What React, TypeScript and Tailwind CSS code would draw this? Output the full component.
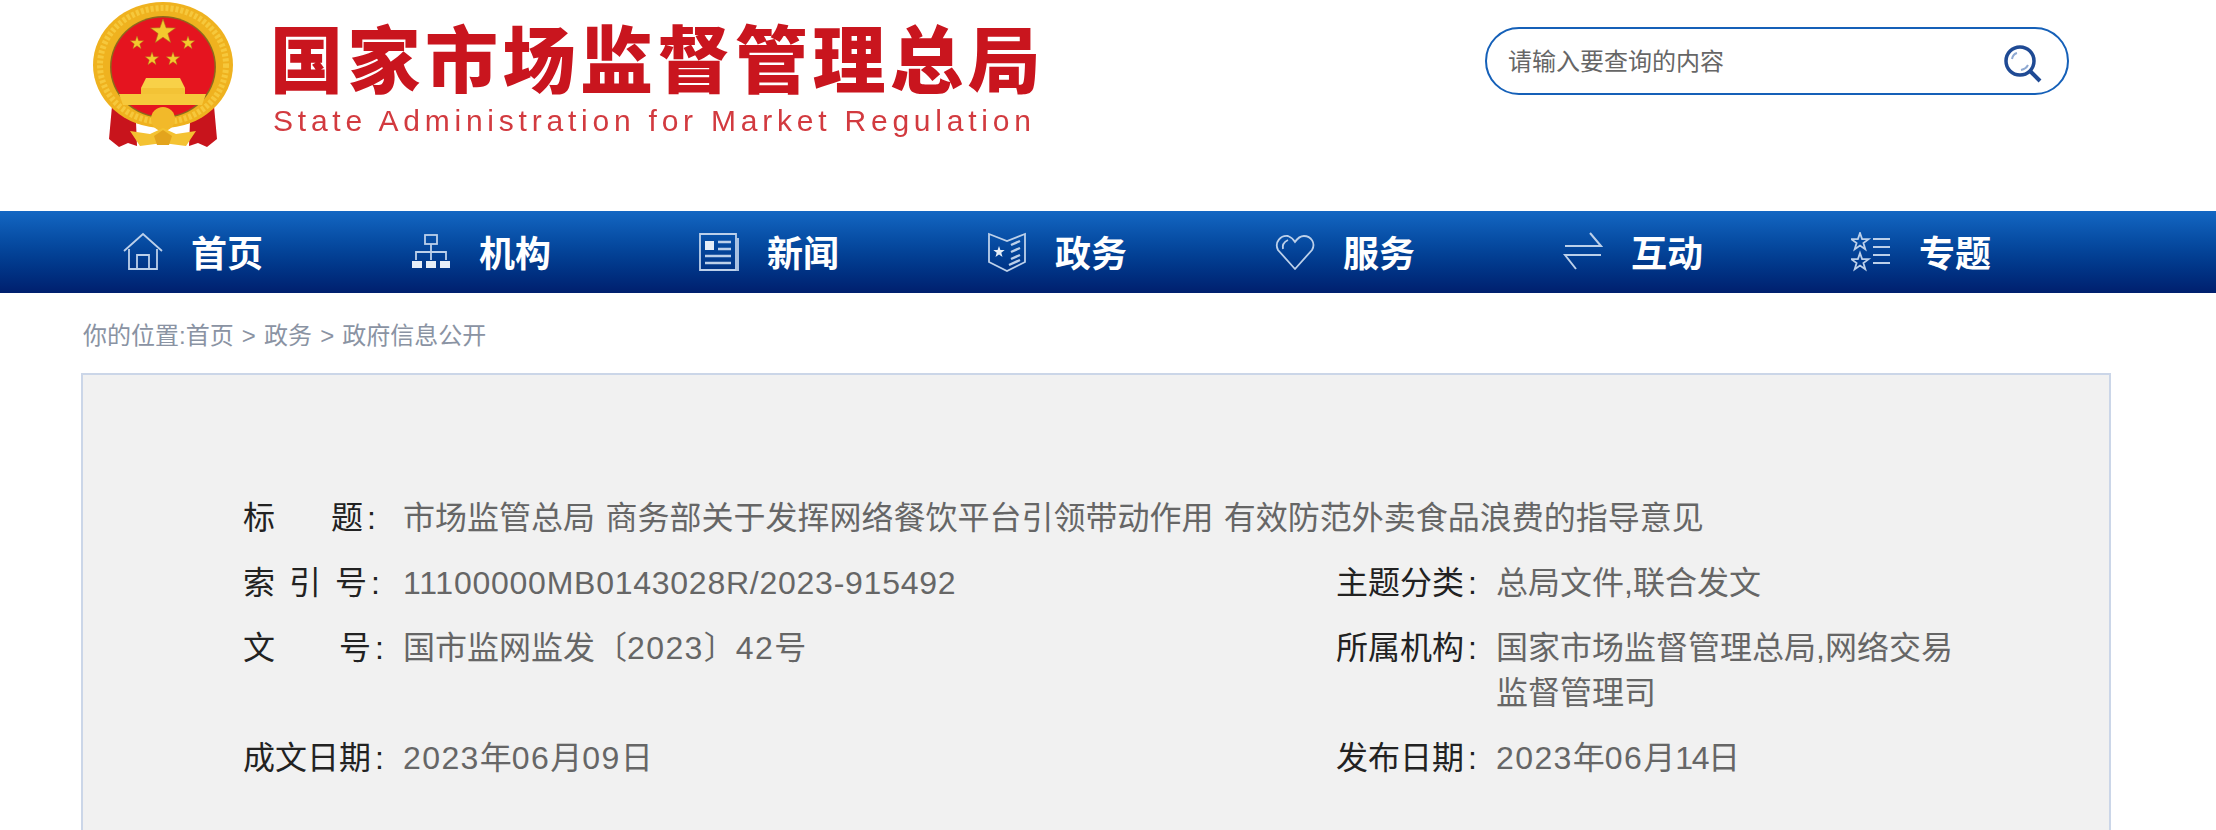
import type { ReactNode } from 'react'

const starPoints = (cx: number, cy: number, r: number) => {
  const pts: string[] = []
  for (let i = 0; i < 10; i++) {
    const rad = i % 2 === 0 ? r : r * 0.4
    const a = -Math.PI / 2 + (i * Math.PI) / 5
    pts.push(`${(cx + rad * Math.cos(a)).toFixed(1)},${(cy + rad * Math.sin(a)).toFixed(1)}`)
  }
  return pts.join(' ')
}

function Emblem() {
  return (
    <svg viewBox="92 0 142 150" className="h-[150px] w-[142px] shrink-0 blur-[0.5px]">
      <path d="M112 106 L136 122 L137 146 L128 143 L119 147 L109 139 Z" fill="#c8141c" />
      <path d="M214 106 L190 122 L189 146 L198 143 L207 147 L217 139 Z" fill="#c8141c" />
      <ellipse cx="163" cy="65" rx="70" ry="63" fill="#efb21f" />
      <ellipse cx="163" cy="65" rx="63" ry="57" fill="none" stroke="#f6c83c" strokeWidth="6" strokeDasharray="3 2" />
      <ellipse cx="163" cy="67" rx="53" ry="51" fill="#8c6a1c" />
      <ellipse cx="163" cy="67" rx="51.5" ry="49.5" fill="#e5141f" />
      <polygon points={starPoints(163, 32, 13)} fill="#f4c92e" stroke="#a8761a" strokeWidth="0.6" />
      <polygon points={starPoints(137, 43, 7)} fill="#f4c92e" stroke="#a8761a" strokeWidth="0.4" />
      <polygon points={starPoints(188, 43, 7)} fill="#f4c92e" stroke="#a8761a" strokeWidth="0.4" />
      <polygon points={starPoints(152, 59, 7)} fill="#f4c92e" stroke="#a8761a" strokeWidth="0.4" />
      <polygon points={starPoints(173, 59, 7)} fill="#f4c92e" stroke="#a8761a" strokeWidth="0.4" />
      <path d="M146 78 L180 78 L185 88 L141 88 Z" fill="#f8d148" />
      <rect x="141" y="88" width="44" height="6" fill="#f3c336" />
      <path d="M119 94 L206 94 L202 105 L123 105 Z" fill="#f6c83c" />
      <circle cx="163" cy="119" r="12" fill="#f2b92a" />
      <path d="M130 131 L150 134 L163 128 L176 134 L196 131 L186 146 L163 143 L140 146 Z" fill="#f4c232" />
      <path d="M163 130 L172 136 L169 145 L157 145 L154 136 Z" fill="#e3a41d" />
    </svg>
  )
}

const iconClass = 'h-[40px] w-[40px] shrink-0 fill-none stroke-[#bcd0ea]'

function HomeIcon() {
  return (
    <svg viewBox="0 0 40 40" className={iconClass} strokeWidth="1.8">
      <path d="M1 19 L20 2 L39 19" />
      <path d="M6 17 V37 H34 V17" />
      <path d="M14 37 V23 H26 V37" />
    </svg>
  )
}

function OrgIcon() {
  return (
    <svg viewBox="0 0 40 40" className={iconClass} strokeWidth="1.8">
      <rect x="14" y="3" width="12" height="9" />
      <path d="M20 12 V28 M5 28 V20 H35 V28" />
      <path d="M1 29 H11 V36 H1 Z M15 29 H25 V36 H15 Z M29 29 H39 V36 H29 Z" fill="#e6eef8" stroke="none" />
    </svg>
  )
}

function NewsIcon() {
  return (
    <svg viewBox="0 0 40 40" className={iconClass} strokeWidth="1.8">
      <path d="M1 2 H37 V38 H1 Z" />
      <path d="M39 6 V39" />
      <rect x="6" y="9" width="9" height="9" fill="#e6eef8" stroke="none" />
      <path d="M19 10 H32 M19 17 H32 M6 24 H32 M6 31 H32" strokeWidth="2.4" />
    </svg>
  )
}

function AffairsIcon() {
  return (
    <svg viewBox="0 0 40 40" className={iconClass} strokeWidth="1.8">
      <path d="M2 2 L20 9 L38 2 V30 L20 39 L2 30 Z" />
      <polygon points={starPoints(12, 20, 6)} fill="#e6eef8" stroke="none" />
      <path d="M24 13 L33 9 M24 20 L33 16 M24 27 L33 23 M22 33 L33 28" strokeWidth="2.4" />
    </svg>
  )
}

function HeartIcon() {
  return (
    <svg viewBox="0 0 40 40" className={iconClass} strokeWidth="1.8">
      <path d="M20 37 L3 18 C-1 10 6 3 13 4 C16 5 18 7 20 10 C22 7 25 4 29 4 C36 4 41 11 37 18 Z" />
      <path d="M8 17 C7 13 9 10 13 8" />
    </svg>
  )
}

function SwapIcon() {
  return (
    <svg viewBox="0 0 40 40" className={iconClass} strokeWidth="2">
      <path d="M2 14 H38 L27 1" />
      <path d="M38 23 H2 L13 37" />
    </svg>
  )
}

function TopicIcon() {
  return (
    <svg viewBox="0 0 40 40" className={iconClass} strokeWidth="1.8">
      <polygon points={starPoints(9, 10, 9)} />
      <polygon points={starPoints(9, 30, 9)} />
      <path d="M22 7 H39 M22 15 H39 M22 23 H39 M22 31 H39" strokeWidth="2" />
    </svg>
  )
}

const navItems: { label: string; icon: ReactNode }[] = [
  { label: '首页', icon: <HomeIcon /> },
  { label: '机构', icon: <OrgIcon /> },
  { label: '新闻', icon: <NewsIcon /> },
  { label: '政务', icon: <AffairsIcon /> },
  { label: '服务', icon: <HeartIcon /> },
  { label: '互动', icon: <SwapIcon /> },
  { label: '专题', icon: <TopicIcon /> },
]

function Field({
  chars,
  width = 'w-[128px]',
  children,
}: {
  chars: string[]
  width?: string
  children: ReactNode
}) {
  return (
    <div className="flex gap-[24px]">
      <div className="flex w-[136px] shrink-0 text-[#222222]">
        <div className={`flex shrink-0 justify-between ${width}`}>
          {chars.map((c) => (
            <span key={c}>{c}</span>
          ))}
        </div>
        <span className="ml-[4px]">:</span>
      </div>
      <div className="whitespace-nowrap text-[#666666]">{children}</div>
    </div>
  )
}

// 数字は参照の書体より狭いので字間で合わせる
function Num({ children }: { children: ReactNode }) {
  return <span className="tracking-[1.4px]">{children}</span>
}

export default function App() {
  return (
    <div className="h-[830px] overflow-hidden bg-white font-['Liberation_Sans','Noto_Sans_CJK_SC',sans-serif]">
      <header className="flex h-[211px] items-start pl-[92px] pr-[147px]">
        <Emblem />
        <div className="ml-[36px] pt-[13px] blur-[0.6px]">
          <div className="whitespace-nowrap font-['Noto_Sans_CJK_SC',sans-serif] text-[73px] font-black leading-[84px] tracking-[4.5px] text-[#c9151e]">
            国家市场监督管理总局
          </div>
          <div className="mt-[6px] whitespace-nowrap pl-[3px] text-[30px] leading-[36px] tracking-[4.78px] text-[#d23a3f]">
            State Administration for Market Regulation
          </div>
        </div>
        <div className="ml-auto mt-[27px] flex h-[68px] w-[584px] items-center justify-between rounded-full border-2 border-[#1560b8] pl-[21px] pr-[25px]">
          <span className="pt-[2px] text-[24px] text-[#666666]">请输入要查询的内容</span>
          <svg viewBox="0 0 38 38" className="mt-[5px] h-[38px] w-[38px] blur-[0.4px]">
            <circle cx="16" cy="16" r="14" fill="none" stroke="#1f4a94" strokeWidth="3.5" />
            <path d="M26 26 L36 36" stroke="#1f4a94" strokeWidth="4" />
            <path d="M8 14 Q9 9 13 8 M17 25 Q22 24 24 20" fill="none" stroke="#8fa9d2" strokeWidth="2" />
          </svg>
        </div>
      </header>

      <nav className="flex h-[82px] items-center bg-gradient-to-b from-[#1467c3] to-[#001f6e] pl-[123px]">
        {navItems.map((item) => (
          <div key={item.label} className="flex w-[288px] shrink-0 items-center gap-[28px]">
            {item.icon}
            <span className="pb-[2px] font-['Noto_Sans_CJK_SC',sans-serif] text-[36px] font-bold leading-none text-white">
              {item.label}
            </span>
          </div>
        ))}
      </nav>

      <div className="flex h-[80px] items-center pl-[83px] pt-[6px] text-[24px] text-[#8a93a3] [word-spacing:1.5px]">
        你的位置:首页 &gt; 政务 &gt; 政府信息公开
      </div>

      <main className="ml-[81px] h-[600px] w-[2030px] border-2 border-[#cbd6e8] bg-[#f1f1f1] pl-[160px] pt-[121px] text-[32px] leading-[45px]">
        <div className="grid grid-cols-[1093px_1fr] gap-y-[20px]">
          <div className="col-span-2">
            <Field chars={['标', '题']} width="w-[120px]">
              <span className="[word-spacing:1.5px]">
                市场监管总局 商务部关于发挥网络餐饮平台引领带动作用 有效防范外卖食品浪费的指导意见
              </span>
            </Field>
          </div>
          <Field chars={['索', '引', '号']} width="w-[124px]">
            <span className="tracking-[0.75px]">11100000MB0143028R/2023-915492</span>
          </Field>
          <Field chars={['主', '题', '分', '类']}>总局文件,联合发文</Field>
          <Field chars={['文', '号']}>
            国市监网监发〔<Num>2023</Num>〕<Num>42</Num>号
          </Field>
          <Field chars={['所', '属', '机', '构']}>
            国家市场监督管理总局,网络交易
            <br />
            监督管理司
          </Field>
          <Field chars={['成', '文', '日', '期']}>
            <Num>2023</Num>年<Num>06</Num>月<Num>09</Num>日
          </Field>
          <Field chars={['发', '布', '日', '期']}>
            <Num>2023</Num>年<Num>06</Num>月<span className="tracking-[-1.4px]">14</span>日
          </Field>
        </div>
      </main>
    </div>
  )
}
